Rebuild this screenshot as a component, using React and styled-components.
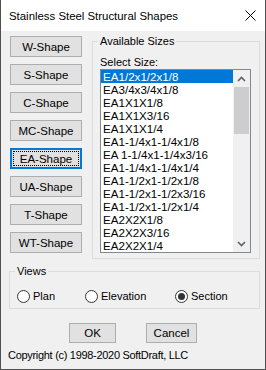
import React from "react";
import styled, { createGlobalStyle } from "styled-components";

const Global = createGlobalStyle`
  html, body { margin: 0; padding: 0; background: #ffffff; }
  * { box-sizing: border-box; }
  body { font-family: "Liberation Sans", Arial, sans-serif; }
`;

const Window = styled.div`
  width: 266px;
  height: 370px;
  border: 1px solid #4f4f4f;
  border-top: none;
  background: #f0f0f0;
  display: flex;
  flex-direction: column;
  overflow: hidden;
`;

const TitleBar = styled.div`
  height: 31px;
  background: #ffffff;
  display: flex;
  align-items: center;
  justify-content: space-between;
  padding: 0 9px 0 8px;
`;

const Title = styled.span`
  font-family: "Liberation Sans", Arial, sans-serif;
  font-size: 11.4px;
  color: #000;
`;

const Body = styled.div`
  display: flex;
  flex-direction: column;
  font-size: 11px;
  color: #000;
`;

const TopRow = styled.div`
  display: flex;
  align-items: flex-start;
  padding-left: 9px;
  gap: 10px;
`;

const ShapeColumn = styled.div`
  display: flex;
  flex-direction: column;
  gap: 7px;
  margin-top: 5px;
  width: 72px;
`;

const PushButton = styled.button`
  width: ${(p) => p.$w || 72}px;
  height: ${(p) => p.$h || 21}px;
  padding: 0;
  margin: 0;
  background: #e1e1e1;
  border: 1px solid ${(p) => (p.$focused ? "#0078d7" : "#adadad")};
  box-shadow: ${(p) => (p.$focused ? "inset 0 0 0 1px #0078d7" : "none")};
  outline: ${(p) => (p.$focused ? "1px dotted #000" : "none")};
  outline-offset: -4px;
  font-family: "Liberation Sans", Arial, sans-serif;
  font-size: 11.5px;
  color: #000;
  display: flex;
  align-items: center;
  justify-content: center;
  cursor: default;
`;

const GroupBox = styled.div`
  position: relative;
  border: 1px solid #dcdcdc;
  width: ${(p) => p.$w}px;
  height: ${(p) => p.$h}px;
  margin-top: ${(p) => p.$mt || 0}px;
  margin-left: ${(p) => p.$ml || 0}px;
  padding: ${(p) => p.$pad};
`;

const Legend = styled.span`
  position: absolute;
  top: -7px;
  left: 5px;
  padding: 0 2px;
  background: #f0f0f0;
  line-height: 13px;
  font-size: 11px;
`;

const FieldLabel = styled.div`
  line-height: 13px;
  font-size: 11px;
`;

const ListBox = styled.div`
  width: 151px;
  height: 184px;
  border: 1px solid #828790;
  background: #ffffff;
  display: flex;
`;

const Items = styled.div`
  flex: 1;
  display: flex;
  flex-direction: column;
`;

const Item = styled.div`
  height: 13px;
  line-height: 13px;
  padding-left: 2px;
  font-size: 11.6px;
  white-space: nowrap;
  background: ${(p) => (p.$selected ? "#0078d7" : "transparent")};
  color: ${(p) => (p.$selected ? "#ffffff" : "#000000")};
`;

const ScrollBar = styled.div`
  width: 17px;
  background: #f0f0f0;
  display: flex;
  flex-direction: column;
  align-items: center;
`;

const ScrollArrow = styled.div`
  width: 17px;
  height: 17px;
  display: flex;
  align-items: center;
  justify-content: center;
`;

const Track = styled.div`
  flex: 1;
  width: 100%;
  display: flex;
  flex-direction: column;
  align-items: center;
`;

const Thumb = styled.div`
  width: 15px;
  height: 47px;
  background: #cdcdcd;
`;

const RadioRow = styled.div`
  display: flex;
  align-items: center;
  height: 13px;
`;

const RadioItem = styled.label`
  display: flex;
  align-items: center;
  gap: 3px;
  width: ${(p) => (p.$w ? `${p.$w}px` : "auto")};
  font-size: 11px;
  line-height: 13px;
`;

const RadioCircle = styled.span`
  width: 13px;
  height: 13px;
  border-radius: 50%;
  border: 1px solid #333333;
  background: #ffffff;
  display: flex;
  align-items: center;
  justify-content: center;
  flex-shrink: 0;
  &::after {
    content: "";
    width: 7px;
    height: 7px;
    border-radius: 50%;
    background: ${(p) => (p.$checked ? "#333333" : "transparent")};
  }
`;

const ButtonRow = styled.div`
  display: flex;
  justify-content: center;
  gap: 30px;
  margin-top: 14px;
`;

const Copyright = styled.div`
  margin: 6px 0 0 7px;
  font-size: 11px;
  line-height: 13px;
  letter-spacing: -0.3px;
`;

const shapes = ["W-Shape", "S-Shape", "C-Shape", "MC-Shape", "EA-Shape", "UA-Shape", "T-Shape", "WT-Shape"];

const sizes = [
  "EA1/2x1/2x1/8",
  "EA3/4x3/4x1/8",
  "EA1X1X1/8",
  "EA1X1X3/16",
  "EA1X1X1/4",
  "EA1-1/4x1-1/4x1/8",
  "EA 1-1/4x1-1/4x3/16",
  "EA1-1/4x1-1/4x1/4",
  "EA1-1/2x1-1/2x1/8",
  "EA1-1/2x1-1/2x3/16",
  "EA1-1/2x1-1/2x1/4",
  "EA2X2X1/8",
  "EA2X2X3/16",
  "EA2X2X1/4",
];

const Chevron = ({ down }) => (
  <svg width="9" height="6" viewBox="0 0 9 6">
    <path
      d={down ? "M1 1 L4.5 4.5 L8 1" : "M1 5 L4.5 1.5 L8 5"}
      fill="none"
      stroke="#606060"
      strokeWidth="1.6"
    />
  </svg>
);

export default function App() {
  return (
    <>
      <Global />
      <Window>
        <TitleBar>
          <Title>Stainless Steel Structural Shapes</Title>
          <svg width="11" height="11" viewBox="0 0 11 11">
            <path d="M0.5 0.5 L10.5 10.5 M10.5 0.5 L0.5 10.5" stroke="#000" strokeWidth="1" />
          </svg>
        </TitleBar>
        <Body>
          <TopRow>
            <ShapeColumn>
              {shapes.map((s) => (
                <PushButton key={s} $focused={s === "EA-Shape"}>
                  {s}
                </PushButton>
              ))}
            </ShapeColumn>
            <GroupBox $w={168} $h={218} $mt={10} $pad="14px 0 0 7px">
              <Legend>Available Sizes</Legend>
              <FieldLabel>Select Size:</FieldLabel>
              <ListBox>
                <Items>
                  {sizes.map((s, i) => (
                    <Item key={s} $selected={i === 0}>
                      {s}
                    </Item>
                  ))}
                </Items>
                <ScrollBar>
                  <ScrollArrow>
                    <Chevron />
                  </ScrollArrow>
                  <Track>
                    <Thumb />
                  </Track>
                  <ScrollArrow>
                    <Chevron down />
                  </ScrollArrow>
                </ScrollBar>
              </ListBox>
            </GroupBox>
          </TopRow>
          <GroupBox $w={251} $h={38} $mt={12} $ml={8} $pad="18px 0 0 7px">
            <Legend>Views</Legend>
            <RadioRow>
              <RadioItem $w={68}>
                <RadioCircle />
                Plan
              </RadioItem>
              <RadioItem $w={90}>
                <RadioCircle />
                Elevation
              </RadioItem>
              <RadioItem>
                <RadioCircle $checked />
                Section
              </RadioItem>
            </RadioRow>
          </GroupBox>
          <ButtonRow>
            <PushButton $w={47} $h={20}>OK</PushButton>
            <PushButton $w={51} $h={20}>Cancel</PushButton>
          </ButtonRow>
          <Copyright>Copyright (c) 1998-2020 SoftDraft, LLC</Copyright>
        </Body>
      </Window>
    </>
  );
}
